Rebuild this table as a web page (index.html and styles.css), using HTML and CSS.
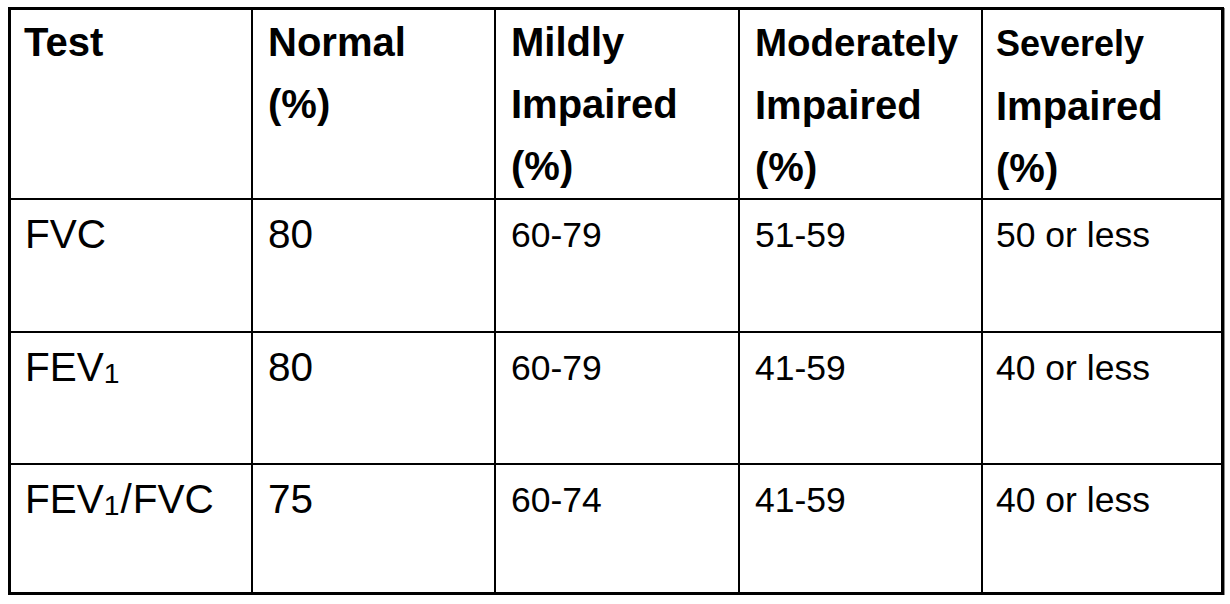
FILE: index.html
```html
<!DOCTYPE html>
<html lang="en">
<head>
<meta charset="utf-8">
<title>Spirometry impairment table</title>
<link rel="stylesheet" href="styles.css">
</head>
<body>
<div class="table">
  <div class="cell head"><span class="h">Test</span></div>
  <div class="cell head mid"><span class="h">Normal<br>(%)</span></div>
  <div class="cell head mid"><span class="h">Mildly<br>Impaired<br>(%)</span></div>
  <div class="cell head mid"><span class="h h-mod">Moderately</span><br><span class="h">Impaired<br>(%)</span></div>
  <div class="cell head"><span class="h h-sev">Severely</span><br><span class="h">Impaired<br>(%)</span></div>

  <div class="cell data big first">FVC</div>
  <div class="cell data big mid">80</div>
  <div class="cell data mid">60-79</div>
  <div class="cell data mid">51-59</div>
  <div class="cell data">50 or less</div>

  <div class="cell data big first">FEV<sub class="sub">1</sub></div>
  <div class="cell data big mid">80</div>
  <div class="cell data mid">60-79</div>
  <div class="cell data mid">41-59</div>
  <div class="cell data">40 or less</div>

  <div class="cell data big first">FEV<sub class="sub">1</sub><span class="slash">/</span>FVC</div>
  <div class="cell data big mid">75</div>
  <div class="cell data mid">60-74</div>
  <div class="cell data mid">41-59</div>
  <div class="cell data">40 or less</div>
</div>
</body>
</html>
```
FILE: styles.css
```css
html, body {
  margin: 0;
  padding: 0;
  background: #ffffff;
}

body {
  font-family: "Liberation Sans", Arial, Helvetica, sans-serif;
  color: #000000;
}

.table {
  margin: 7px 0 0 8px;
  width: 1216px;
  box-sizing: border-box;
  display: grid;
  grid-template-columns: 240px 241px 242px 241px 238px;
  grid-template-rows: 188px 131px 130px 127px;
  gap: 2px;
  padding: 3px;
  background: #000000;
  box-shadow: 1px 1px 0 #8a8a8a;
}

.cell {
  background: #ffffff;
  padding-left: 13px;
  box-sizing: border-box;
}

.cell.mid {
  padding-left: 15px;
}

.cell.first {
  padding-left: 14px;
}

.head {
  padding-top: 1px;
  font-weight: bold;
  font-size: 40px;
  line-height: 62px;
}

.h-mod {
  font-size: 38.5px;
}

.h-sev {
  font-size: 36px;
}

.data {
  font-size: 35.5px;
  line-height: 46px;
  padding-top: 12px;
}

.data.big {
  font-size: 40.5px;
  padding-top: 11px;
}

.sub {
  font-size: 0.7em;
  vertical-align: -0.06em;
  line-height: 0;
}

.slash {
  margin: 0 1px;
}
```
